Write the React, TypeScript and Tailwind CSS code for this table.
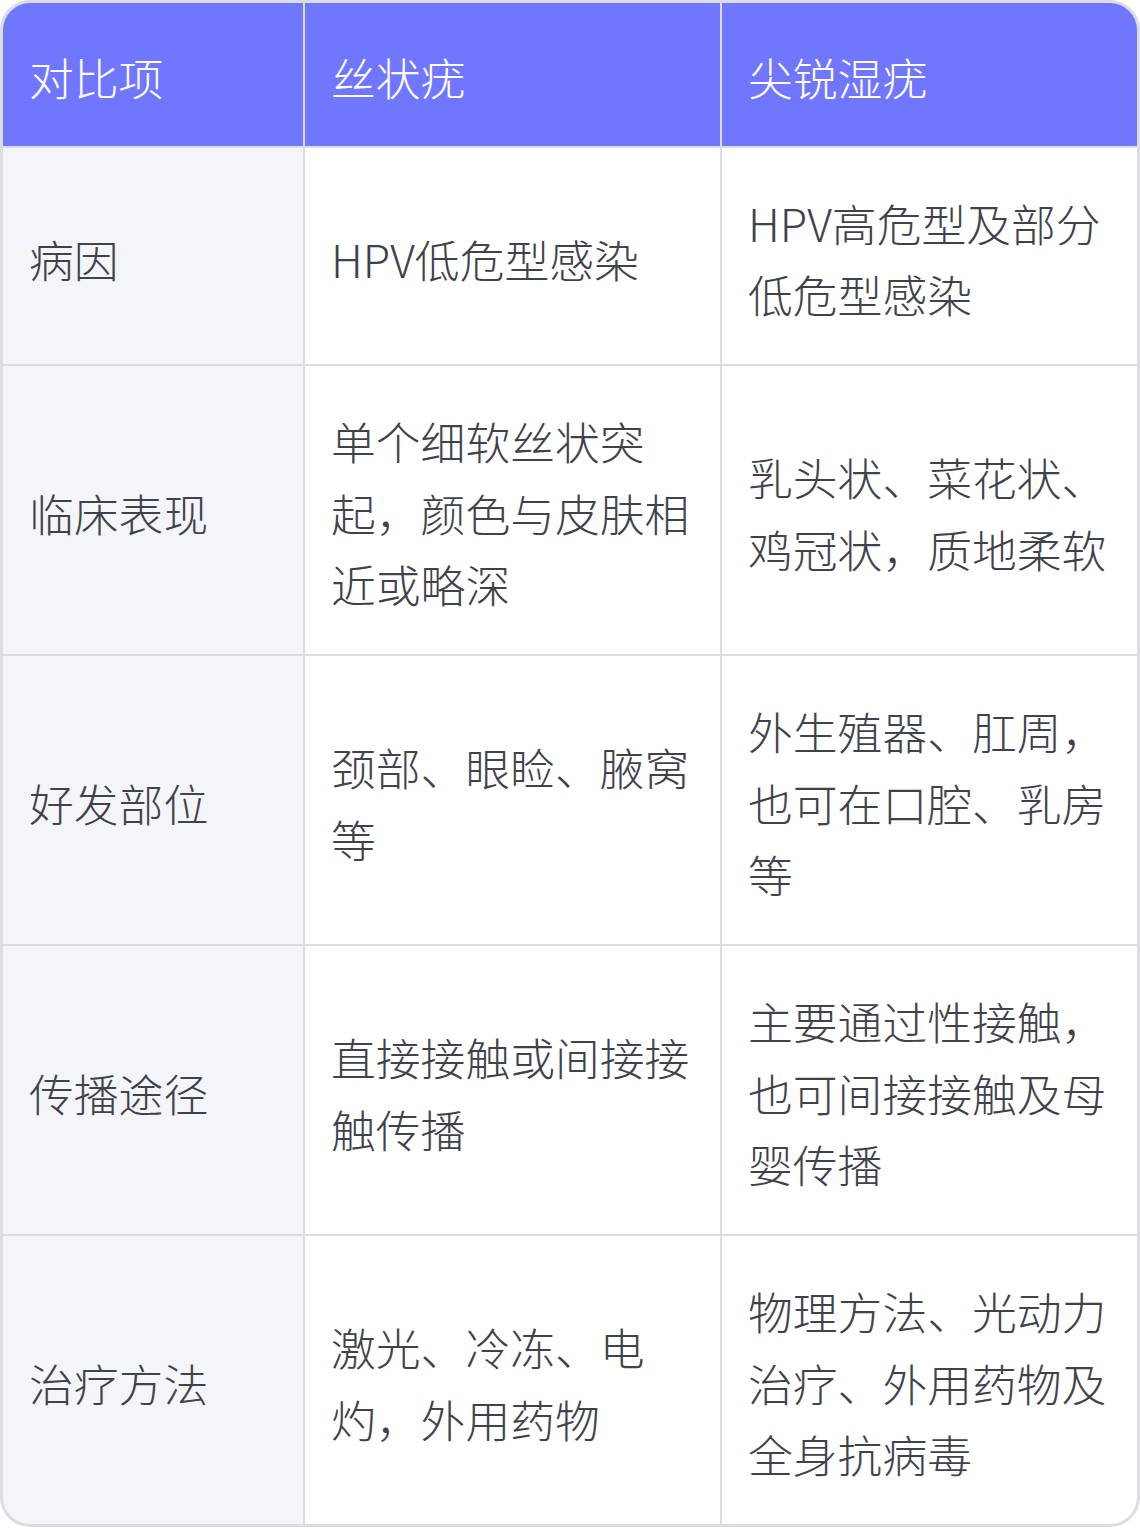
const HEAD = ["对比项", "丝状疣", "尖锐湿疣"];

const ROWS = [
  ["病因", "HPV低危型感染", "HPV高危型及部分低危型感染"],
  ["临床表现", "单个细软丝状突起，颜色与皮肤相近或略深", "乳头状、菜花状、鸡冠状，质地柔软"],
  ["好发部位", "颈部、眼睑、腋窝等", "外生殖器、肛周，也可在口腔、乳房等"],
  ["传播途径", "直接接触或间接接触传播", "主要通过性接触，也可间接接触及母婴传播"],
  ["治疗方法", "激光、冷冻、电灼，外用药物", "物理方法、光动力治疗、外用药物及全身抗病毒"],
];

export default function App() {
  return (
    <div
      className="w-[1140px] bg-white"
      style={{ fontFamily: '"Noto Sans CJK SC", "Noto Sans", sans-serif' }}
    >
      <div className="overflow-hidden rounded-[30px] border-[3px] border-[#dcdde2] bg-[#dcdde2]">
        <div className="grid grid-cols-[300px_415px_415px] gap-[2px]">
          {HEAD.map((h) => (
            <div
              key={h}
              className="flex items-center bg-[#7176ff] pl-[26px] pr-[28px] pt-[38px] pb-[33px] text-[44.8px] font-light leading-[1.6] text-white"
            >
              {h}
            </div>
          ))}
          {ROWS.map((row) =>
            row.map((cell, i) => (
              <div
                key={row[0] + i}
                className={`flex items-center pl-[26px] pr-[28px] pt-[39px] pb-[34px] text-[44.8px] font-light leading-[1.6] text-[#3f424b] ${
                  i === 0 ? "bg-[#f4f5f9]" : "bg-white"
                }`}
              >
                <span>{cell}</span>
              </div>
            ))
          )}
        </div>
      </div>
    </div>
  );
}
